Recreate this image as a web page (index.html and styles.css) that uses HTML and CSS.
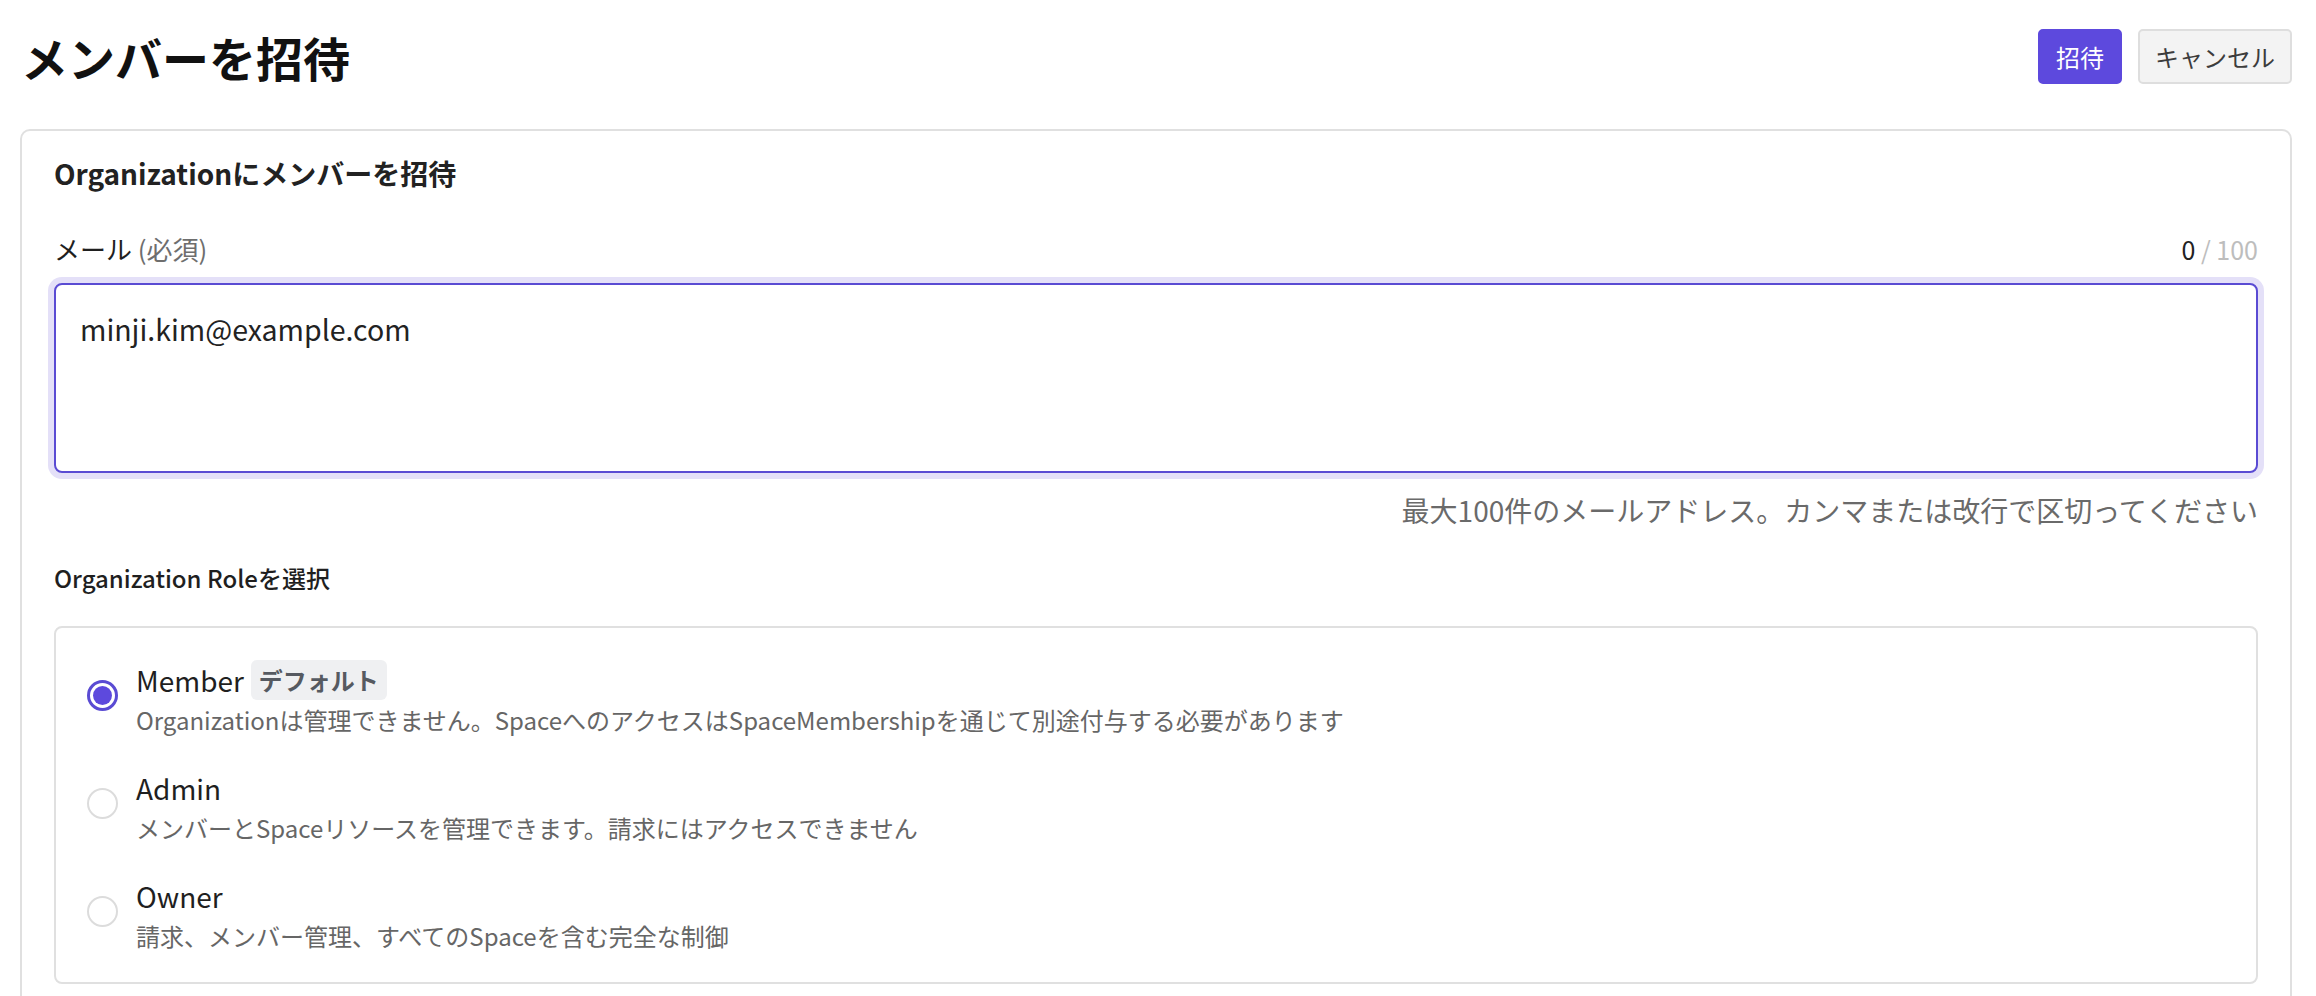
FILE: index.html
```html
<!DOCTYPE html>
<html lang="ja">
<head>
<meta charset="utf-8">
<title>メンバーを招待</title>
<link rel="stylesheet" href="styles.css">
</head>
<body>
<div class="page">
  <header class="header">
    <h1 class="title">メンバーを招待</h1>
    <div class="actions">
      <button class="btn btn-primary" type="button">招待</button>
      <button class="btn btn-secondary" type="button">キャンセル</button>
    </div>
  </header>

  <section class="card">
    <h2 class="card-title">Organizationにメンバーを招待</h2>

    <div class="field-head">
      <label class="field-label" for="emails">メール <span class="required">(必須)</span></label>
      <span class="counter"><span class="count">0</span> <span class="limit">/ 100</span></span>
    </div>
    <textarea id="emails" class="textarea">minji.kim@example.com</textarea>
    <p class="help">最大100件のメールアドレス。カンマまたは改行で区切ってください</p>

    <h3 class="section-label">Organization Roleを選択</h3>

    <div class="roles">
      <label class="role">
        <span class="radio radio-checked"><span class="radio-dot"></span></span>
        <span class="role-text">
          <span class="role-name">Member <span class="badge">デフォルト</span></span>
          <span class="role-desc">Organizationは管理できません。SpaceへのアクセスはSpaceMembershipを通じて別途付与する必要があります</span>
        </span>
      </label>
      <label class="role">
        <span class="radio"></span>
        <span class="role-text">
          <span class="role-name">Admin</span>
          <span class="role-desc">メンバーとSpaceリソースを管理できます。請求にはアクセスできません</span>
        </span>
      </label>
      <label class="role">
        <span class="radio"></span>
        <span class="role-text">
          <span class="role-name">Owner</span>
          <span class="role-desc">請求、メンバー管理、すべてのSpaceを含む完全な制御</span>
        </span>
      </label>
    </div>
  </section>
</div>
</body>
</html>
```
FILE: styles.css
```css
* { box-sizing: border-box; }

html, body {
  margin: 0;
  padding: 0;
  background: #ffffff;
}

body {
  font-family: "Noto Sans CJK JP", "Noto Sans", sans-serif;
  color: #1f1f1f;
}

.page {
  padding: 0 24px 0 20px;
}

.header {
  display: flex;
  align-items: center;
  justify-content: space-between;
  height: 55px;
  margin-top: 29px;
  margin-bottom: 45px;
}

.title {
  margin: 1px 0 0 1px;
  font-size: 47px;
  font-weight: 700;
  line-height: 1.2;
  color: #111111;
}

.actions {
  display: flex;
  gap: 16px;
}

.btn {
  height: 55px;
  padding: 0 16px;
  border-radius: 5px;
  font-family: inherit;
  font-size: 24px;
  line-height: 1;
  cursor: pointer;
}

.btn-primary {
  background: #5d49dd;
  border: 2px solid #5d49dd;
  color: #ffffff;
}

.btn-secondary {
  background: #f3f3f3;
  border: 2px solid #dedede;
  color: #3c3c3c;
  padding: 0 15px;
}

.card {
  border: 2px solid #e0e0e0;
  border-radius: 10px;
  padding: 23px 32px 40px 32px;
}

.card-title {
  margin: 0;
  font-size: 28px;
  font-weight: 700;
  line-height: 1.4;
  color: #222222;
}

.field-head {
  display: flex;
  justify-content: space-between;
  align-items: center;
  margin-top: 38px;
  height: 36px;
}

.field-label {
  font-size: 26px;
  line-height: 1.4;
  color: #1f1f1f;
  font-weight: 400;
}

.required {
  color: #6e6e6e;
  font-weight: 400;
}

.counter {
  font-size: 25px;
  line-height: 1.4;
}

.count { color: #222222; }
.limit { color: #bdbdbd; }

.textarea {
  display: block;
  width: 100%;
  height: 190px;
  margin-top: 16px;
  padding: 24px 24px;
  border: 2px solid #5a4bd3;
  border-radius: 8px;
  box-shadow: 0 0 0 6px #e4e0f8;
  font-family: inherit;
  font-size: 28.5px;
  line-height: 1.4;
  color: #222222;
  resize: none;
  outline: none;
}

.help {
  margin: 18px 0 0 0;
  text-align: right;
  font-size: 28px;
  line-height: 1.4;
  color: #6a6a6a;
}

.section-label {
  margin: 31px 0 0 0;
  font-size: 24px;
  font-weight: 500;
  line-height: 1.4;
  color: #1f1f1f;
}

.roles {
  margin-top: 31px;
  border: 2px solid #e0e0e0;
  border-radius: 8px;
  padding: 32px 31px 28px 31px;
  display: flex;
  flex-direction: column;
  gap: 30px;
}

.role {
  display: flex;
  align-items: flex-start;
  gap: 18px;
}

.radio {
  flex: none;
  width: 31px;
  height: 31px;
  margin-top: 20px;
  border-radius: 50%;
  border: 2px solid #dcdcdc;
  background: #ffffff;
  display: flex;
  align-items: center;
  justify-content: center;
}

.radio-checked {
  border: 3px solid #5a4bd3;
}

.radio-dot {
  width: 19px;
  height: 19px;
  border-radius: 50%;
  background: #5d49dd;
}

.role-text {
  display: flex;
  flex-direction: column;
  gap: 2px;
}

.role-name {
  display: flex;
  align-items: center;
  gap: 7px;
  height: 40px;
  font-size: 28px;
  line-height: 40px;
  color: #1f1f1f;
}

.badge {
  display: inline-block;
  height: 40px;
  padding: 0 8px;
  border-radius: 6px;
  background: #eff0f2;
  color: #565a61;
  font-size: 24px;
  font-weight: 700;
  line-height: 40px;
}

.role-desc {
  font-size: 24px;
  line-height: 36px;
  color: #666666;
}
```
